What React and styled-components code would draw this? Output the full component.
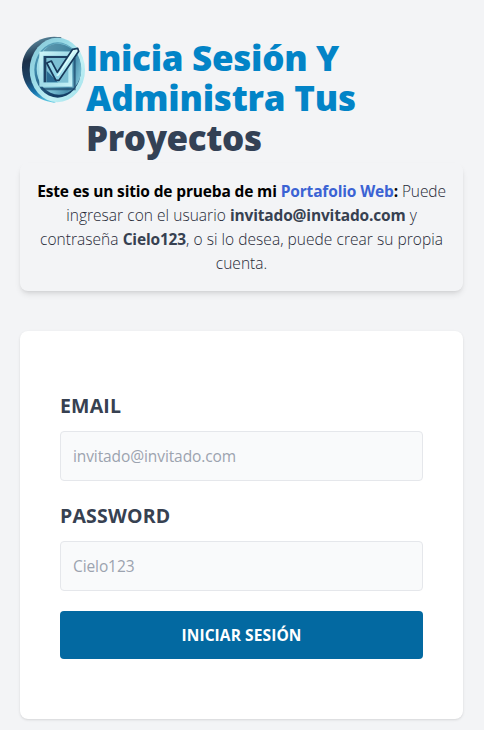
import React from "react";
import styled, { createGlobalStyle } from "styled-components";

const GlobalStyle = createGlobalStyle`
  *, *::before, *::after { box-sizing: border-box; }
  body {
    margin: 0;
    background: #f3f4f6;
    font-family: "Open Sans", "Noto Sans", sans-serif;
    overflow: hidden;
  }
`;

const Page = styled.main`
  height: 730px;
  padding: 36px 21px 0 20px;
`;

const Header = styled.header`
  display: flex;
  align-items: flex-start;
`;

const Logo = styled.svg`
  flex: none;
  width: 66px;
  height: 67px;
`;

const Title = styled.h1`
  margin: 2px 0 0;
  font-size: 35px;
  line-height: 40px;
  font-weight: 800;
  text-transform: capitalize;
  color: #0284c7;
`;

const Line = styled.span`
  display: block;
  white-space: nowrap;
  letter-spacing: ${(p) => p.$track || 0}px;
`;

const DarkLine = styled(Line)`
  color: #334155;
`;

const Notice = styled.section`
  margin-top: 5px;
  height: 128px;
  padding: 16px 0;
  border-radius: 8px;
  text-align: center;
  font-size: 15.5px;
  line-height: 24px;
  font-weight: 300;
  color: #1f2937;
  box-shadow: 0 4px 6px -1px rgba(0, 0, 0, 0.1), 0 2px 4px -2px rgba(0, 0, 0, 0.1);
`;

const Strong = styled.strong`
  font-weight: 700;
  color: ${(p) => p.$color || "#374151"};
  letter-spacing: ${(p) => p.$track || 0}px;
`;

const Link = styled.a`
  color: #3b63d4;
  text-decoration: none;
`;

const Form = styled.form`
  margin-top: 40px;
  height: 388px;
  padding: 60px 40px;
  border-radius: 8px;
  background: #fff;
  box-shadow: 0 1px 3px rgba(0, 0, 0, 0.1), 0 1px 2px -1px rgba(0, 0, 0, 0.1);
`;

const Field = styled.div`
  height: 90px;
  margin-bottom: 20px;
`;

const Label = styled.label`
  display: block;
  height: 28px;
  margin-bottom: 12px;
  line-height: 30px;
  font-size: 19.5px;
  font-weight: 700;
  text-transform: uppercase;
  color: #374151;
  letter-spacing: 0.2px;
`;

const Input = styled.input`
  display: block;
  width: 100%;
  height: 50px;
  padding: 0 12px;
  border: 1px solid #e5e7eb;
  border-radius: 4px;
  background: #f9fafb;
  font: 400 15.5px/24px "Open Sans", "Noto Sans", sans-serif;
  letter-spacing: -0.1px;
  outline: none;
  &::placeholder { color: #9ca3af; opacity: 1; }
`;

const Submit = styled.button`
  display: block;
  width: 100%;
  height: 48px;
  border: 0;
  border-radius: 4px;
  background: #0369a1;
  color: #fff;
  font: 700 15.5px/24px "Open Sans", "Noto Sans", sans-serif;
  text-transform: uppercase;
  letter-spacing: 0.1px;
`;

function CoinLogo() {
  return (
    <Logo viewBox="30 33 198 201" aria-hidden="true">
      <defs>
        <linearGradient id="edge" x1="0.4" y1="0" x2="0.6" y2="1">
          <stop offset="0" stopColor="#5f8ea3" />
          <stop offset="0.3" stopColor="#1b3049" />
          <stop offset="0.6" stopColor="#1d4468" />
          <stop offset="0.8" stopColor="#1676b0" />
          <stop offset="1" stopColor="#5ec8e2" />
        </linearGradient>
        <linearGradient id="rim" x1="0.1" y1="0.1" x2="0.9" y2="0.9">
          <stop offset="0" stopColor="#8acbda" />
          <stop offset="0.35" stopColor="#9bdce8" />
          <stop offset="0.7" stopColor="#c3f1f5" />
          <stop offset="1" stopColor="#a3e2ec" />
        </linearGradient>
        <linearGradient id="groove" x1="0" y1="0" x2="0.3" y2="1">
          <stop offset="0" stopColor="#5fa5bc" />
          <stop offset="0.5" stopColor="#3b86a9" />
          <stop offset="1" stopColor="#143f66" />
        </linearGradient>
        <linearGradient id="face" x1="0" y1="0.3" x2="1" y2="0.6">
          <stop offset="0" stopColor="#a9e2ec" />
          <stop offset="0.45" stopColor="#7cc3d6" />
          <stop offset="0.8" stopColor="#4a90ae" />
          <stop offset="1" stopColor="#7cc2d5" />
        </linearGradient>
        <linearGradient id="frame" x1="0" y1="0" x2="1" y2="1">
          <stop offset="0" stopColor="#c9f3f7" />
          <stop offset="0.5" stopColor="#a0dbe8" />
          <stop offset="1" stopColor="#c4f1f6" />
        </linearGradient>
        <linearGradient id="tick" x1="0" y1="1" x2="1" y2="0">
          <stop offset="0" stopColor="#6dc0da" />
          <stop offset="0.5" stopColor="#b3eaf3" />
          <stop offset="1" stopColor="#d8fafa" />
        </linearGradient>
      </defs>
      <path d="M132 35C76 36 36 77 36 127c0 57 40 101 96 106l22-7V37z" fill="url(#edge)" />
      <ellipse cx="142" cy="135" rx="83" ry="97" fill="url(#rim)" />
      <ellipse cx="143" cy="135" rx="70" ry="83" fill="url(#groove)" />
      <ellipse cx="147" cy="132" rx="67" ry="77" fill="url(#face)" />
      <path d="M100 79c14-19 34-25 51-22 18 3 31 11 41 22z" fill="#2d6885" opacity=".6" />
      <path d="M92 188h99V96l6 3v97h-96z" fill="#19476b" opacity=".7" />
      <rect x="92" y="84" width="92" height="98" fill="#7cc0d4" />
      <rect x="94" y="86" width="87" height="93" fill="none" stroke="url(#frame)" strokeWidth="12" />
      <path d="M101 93h76v6h-68v73h-8z" fill="#1d4264" />
      <path d="M110 137l34 35h-34z" fill="#2b6c93" />
      <path d="M110 114l14-6 18 34 46-69 15-3 3 9-59 87-10-1z" fill="url(#tick)" stroke="#17395a" strokeWidth="5" strokeLinejoin="round" />
      <path d="M192 77l-47 73-5 1" fill="none" stroke="#dffcfc" strokeWidth="4" />
    </Logo>
  );
}

export default function App() {
  return (
    <>
      <GlobalStyle />
      <Page>
        <Header>
          <CoinLogo />
          <Title>
            <Line $track={-0.3}>Inicia sesión y</Line>
            <Line $track={-0.22}>administra tus</Line>
            <DarkLine $track={-0.4}>proyectos</DarkLine>
          </Title>
        </Header>
        <Notice>
          <Line $track={-0.1}>
            <Strong $color="#000" $track={-0.15}>
              Este es un sitio de prueba de mi <Link>Portafolio Web</Link>:
            </Strong>{" "}
            Puede
          </Line>
          <Line $track={0.04}>
            ingresar con el usuario <Strong $track={-0.16}>invitado@invitado.com</Strong> y
          </Line>
          <Line $track={0.04}>
            contraseña <Strong $track={-0.16}>Cielo123</Strong>, o si lo desea, puede crear su propia
          </Line>
          <Line>cuenta.</Line>
        </Notice>
        <Form onSubmit={(e) => e.preventDefault()}>
          <Field>
            <Label htmlFor="email">Email</Label>
            <Input id="email" type="email" placeholder="invitado@invitado.com" />
          </Field>
          <Field>
            <Label htmlFor="password">Password</Label>
            <Input id="password" type="password" placeholder="Cielo123" />
          </Field>
          <Submit type="submit">Iniciar sesión</Submit>
        </Form>
      </Page>
    </>
  );
}
